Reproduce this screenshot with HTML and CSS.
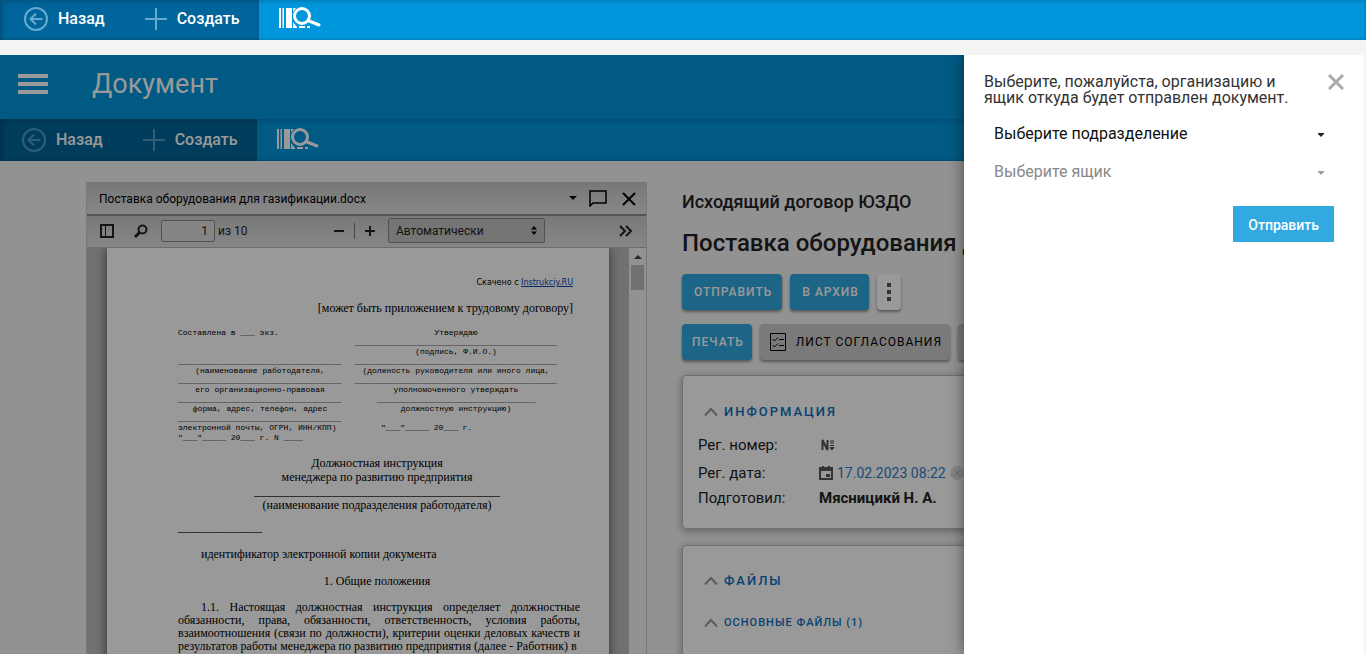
FILE: index.html
```html
<!DOCTYPE html>
<html lang="ru">
<head>
<meta charset="utf-8">
<title>Документ</title>
<link rel="stylesheet" href="styles.css">
</head>
<body>
<svg class="sprite" aria-hidden="true">
  <symbol id="back" viewBox="0 0 24 24"><g fill="none" stroke="currentColor" stroke-width="2"><circle cx="12" cy="12" r="11"/><path d="M18.500 12H7M12 6.500 6.500 12l5.500 5.500"/></g></symbol>
  <symbol id="plus" viewBox="0 0 22 22"><path d="M11 0v22M0 11h22" stroke="currentColor" stroke-width="2"/></symbol>
  <symbol id="scan" viewBox="0 0 42 22">
    <path fill="currentColor" d="M0 1h2v20H0zM3.500 1h1.500v20H3.500zM7 1h6v20H7zM14 1h3l-3 4zM14 15l4 5v1h-4zM20 19h6v2h-6zM28 19h3v2h-3z"/>
    <circle cx="23" cy="9" r="7.500" fill="none" stroke="currentColor" stroke-width="3"/>
    <path d="M29 13.500l11 4.500" stroke="currentColor" stroke-width="3" stroke-linecap="round"/>
  </symbol>
  <symbol id="up" viewBox="0 0 14 10"><path d="M1 8.500 7 2l6 6.500" fill="none" stroke="currentColor" stroke-width="2"/></symbol>
</svg>

<nav class="toolbar" aria-label="Панель">
  <div class="toolbar-group">
    <button class="tool" type="button"><svg class="i24"><use href="#back"/></svg>Назад</button>
    <button class="tool" type="button"><svg class="i22"><use href="#plus"/></svg>Создать</button>
  </div>
  <button class="scan" type="button" aria-label="Сканировать"><svg><use href="#scan"/></svg></button>
</nav>

<div class="frame">
  <header class="app-header">
    <button class="menu" type="button" aria-label="Меню"><span></span><span></span><span></span></button>
    <h1>Документ</h1>
  </header>
  <nav class="toolbar toolbar-inner" aria-label="Действия">
    <div class="toolbar-group">
      <button class="tool" type="button"><svg class="i24"><use href="#back"/></svg>Назад</button>
      <button class="tool" type="button"><svg class="i22"><use href="#plus"/></svg>Создать</button>
    </div>
    <button class="scan" type="button" aria-label="Сканировать"><svg><use href="#scan"/></svg></button>
  </nav>

  <main class="content">
    <section class="viewer">
      <div class="viewer-title">
        <span class="file-name">Поставка оборудования для газификации.docx</span>
        <button type="button" aria-label="Список файлов"><svg width="8" height="5"><path d="M0 0h8L4 4z"/></svg></button>
        <button type="button" aria-label="Комментарий"><svg width="18" height="17" viewBox="0 0 18 17"><path d="M1 1h16v12H4l-3 3z" fill="none" stroke="#000" stroke-width="1.500"/></svg></button>
        <button class="close" type="button" aria-label="Закрыть"><svg width="14" height="14"><path d="M1 1l12 12M13 1 1 13" stroke="#000" stroke-width="2"/></svg></button>
      </div>
      <div class="viewer-tools">
        <button type="button" aria-label="Боковая панель"><svg width="14" height="14"><path d="M1 1h12v12H1z" fill="none" stroke="#222" stroke-width="2"/><path d="M5.500 1v12" stroke="#222"/></svg></button>
        <button class="find" type="button" aria-label="Найти"><svg width="14" height="14"><circle cx="8.500" cy="5.500" r="4" fill="none" stroke="#222" stroke-width="2"/><path d="M5.500 8.500 1 13" stroke="#222" stroke-width="3"/></svg></button>
        <input class="page-no" type="text" value="1" aria-label="Страница">
        <span class="page-count">из 10</span>
        <button class="minus" type="button" aria-label="Уменьшить"><svg width="10" height="10"><path d="M0 5h10" stroke="#222" stroke-width="2"/></svg></button>
        <i class="sep"></i>
        <button type="button" aria-label="Увеличить"><svg width="10" height="10"><path d="M0 5h10M5 0v10" stroke="#222" stroke-width="2"/></svg></button>
        <span class="scale"><select aria-label="Масштаб"><option>Автоматически</option></select><svg width="6" height="9"><path d="M0 3.500h6L3 0zM0 5.500h6L3 9z"/></svg></span>
        <button class="more" type="button" aria-label="Ещё"><svg width="14" height="12"><path d="M1 1l5 5-5 5M7 1l5 5-5 5" fill="none" stroke="#222" stroke-width="2"/></svg></button>
      </div>
      <div class="viewer-body">
        <article class="sheet">
          <p class="source">Скачено с <a href="#">Instrukciy.RU</a></p>
          <p class="note">[может быть приложением к трудовому договору]</p>
          <div class="form">
            <div class="form-left">
              <span>Составлена в ___ экз.</span>
              <span></span>
              <span></span>
              <span>__________________________________</span>
              <span class="mid">(наименование работодателя,</span>
              <span>__________________________________</span>
              <span class="mid">его организационно-правовая</span>
              <span>__________________________________</span>
              <span class="mid">форма, адрес, телефон, адрес</span>
              <span>__________________________________</span>
              <span>электронной почты, ОГРН, ИНН/КПП)</span>
              <span>"___"_____ 20___ г. N ____</span>
            </div>
            <div class="form-right">
              <span class="mid">Утверждаю</span>
              <span>__________________________________________</span>
              <span class="mid">(подпись, Ф.И.О.)</span>
              <span>__________________________________________</span>
              <span class="mid">(должность руководителя или иного лица,</span>
              <span>__________________________________________</span>
              <span class="mid">уполномоченного утверждать</span>
              <span class="mid">_________________________________</span>
              <span class="mid">должностную инструкцию)</span>
              <span></span>
              <span class="date">"___"_____ 20___ г.</span>
            </div>
          </div>
          <p class="center head">Должностная инструкция<br>менеджера по развитию предприятия<br>_________________________________________<br>(наименование подразделения работодателя)</p>
          <p>______________</p>
          <p class="ident">идентификатор электронной копии документа</p>
          <p class="center">1. Общие положения</p>
          <p class="clause">1.1. Настоящая должностная инструкция определяет должностные обязанности, права, обязанности, ответственность, условия работы, взаимоотношения (связи по должности), критерии оценки деловых качеств и результатов работы менеджера по развитию предприятия (далее - Работник) в</p>
        </article>
        <div class="scrollbar"><svg width="8" height="4"><path d="M0 4h8L4 0z"/></svg><span></span></div>
      </div>
    </section>

    <section class="details">
      <h3>Исходящий договор ЮЗДО</h3>
      <h2>Поставка оборудования для газификации</h2>
      <div class="actions">
        <button class="btn" type="button">ОТПРАВИТЬ</button>
        <button class="btn" type="button">В АРХИВ</button>
        <button class="btn dots" type="button" aria-label="Ещё действия"><svg width="4" height="18"><path d="M0 0h4v4H0zM0 7h4v4H0zM0 14h4v4H0z"/></svg></button>
      </div>
      <div class="actions tight">
        <button class="btn" type="button">ПЕЧАТЬ</button>
        <button class="btn gray" type="button"><svg width="16" height="18" viewBox="0 0 16 18"><path d="M.5.5h15v17H.5zM9 6.500h5M9 12.500h5M2.500 6l2 2L8 4.500M2.500 12l2 2L8 10.500" fill="none" stroke="#000"/></svg>ЛИСТ СОГЛАСОВАНИЯ</button>
        <button class="btn gray" type="button" aria-label="Другие действия"></button>
      </div>
      <div class="card">
        <h4><svg><use href="#up"/></svg>ИНФОРМАЦИЯ</h4>
        <dl>
          <dt>Рег. номер:</dt>
          <dd><svg class="num" width="14" height="12" viewBox="0 0 14 12"><path d="M1.500 11V1l5 10V1" fill="none" stroke="#555" stroke-width="2"/><circle cx="11" cy="3" r="1.500" fill="none" stroke="#555"/><path d="M9 6.500h4M9 8.500h4l-2 2.500z" stroke="#555" fill="#555" stroke-width="1"/></svg></dd>
          <dt>Рег. дата:</dt>
          <dd><svg width="14" height="14"><path d="M1 2h12v11H1z" fill="none" stroke="#555" stroke-width="2"/><path d="M0 1h14v4H0zM3 0h2v2H3zM9 0h2v2H9zM7 8h4v3H7z" fill="#555"/></svg><a href="#">17.02.2023 08:22</a><svg width="14" height="14"><circle cx="7" cy="7" r="7" fill="#e0e0e0"/><path d="M4 4l6 6M10 4l-6 6" stroke="#bbb"/></svg></dd>
          <dt>Подготовил:</dt>
          <dd><strong>Мясницикй Н. А.</strong></dd>
        </dl>
      </div>
      <div class="card">
        <h4><svg><use href="#up"/></svg>ФАЙЛЫ</h4>
        <h5><svg><use href="#up"/></svg>ОСНОВНЫЕ ФАЙЛЫ (1)</h5>
      </div>
    </section>
  </main>
  <div class="scrim"></div>

  <aside class="drawer">
    <form>
      <div class="drawer-head">
        <p>Выберите, пожалуйста, организацию и ящик откуда будет отправлен документ.</p>
        <button type="button" aria-label="Закрыть"><svg width="16" height="16"><path d="M1 1l14 14M15 1 1 15" stroke="#aaa" stroke-width="3"/></svg></button>
      </div>
      <div class="pick"><select aria-label="Подразделение"><option>Выберите подразделение</option></select><svg width="6" height="4"><path d="M0 0h6v1L3 4 0 1z"/></svg></div>
      <div class="pick off"><select aria-label="Ящик" disabled><option>Выберите ящик</option></select><svg width="6" height="4"><path d="M0 0h6v1L3 4 0 1z"/></svg></div>
      <button class="send" type="button">Отправить</button>
    </form>
  </aside>
</div>
</body>
</html>
```
FILE: styles.css
```css
* { box-sizing: border-box; }
html, body { height: 100%; }
body {
  margin: 0;
  display: flex;
  flex-direction: column;
  gap: 15px;
  overflow: hidden;
  background: #f4f4f4;
  font-family: Roboto, "Noto Sans", sans-serif;
  color: #222;
}
h1, h2, h3, h4, h5, p, dl, dd { margin: 0; }
button, select, input { font: inherit; color: inherit; }
button { padding: 0; border: 0; background: none; }
svg { flex: none; display: block; }
.sprite { position: absolute; width: 0; height: 0; }

.toolbar {
  flex: none;
  display: flex;
  height: 40px;
  background: #0096dc;
  box-shadow: inset 0 2px 4px rgba(0, 0, 0, .15), inset 0 -1px 3px rgba(0, 0, 0, .15);
}
.toolbar-group {
  display: flex;
  gap: 40px;
  padding: 0 19px 3px 24px;
  background: #00659a;
  box-shadow: inset 3px 2px 5px rgba(0, 0, 0, .15), inset 0 -1px 3px rgba(0, 0, 0, .15);
}
.tool {
  display: flex;
  align-items: center;
  gap: 10px;
  font-size: 16px;
  font-weight: 500;
  color: #fff;
}
.tool svg { color: #66abd0; }
.i24 { width: 24px; height: 24px; }
.i22 { width: 22px; height: 22px; }
.scan { padding: 0 20px 4px; color: #fff; }
.scan svg { width: 42px; height: 22px; }
.toolbar-inner { height: 42px; }
.toolbar-inner .toolbar-group { padding-left: 22px; padding-bottom: 1px; }
.toolbar-inner .tool svg { opacity: .8; }
.toolbar-inner .scan { padding-bottom: 2px; }

.frame {
  position: relative;
  flex: 1;
  min-height: 0;
  margin-right: 2px;
  display: flex;
  flex-direction: column;
  overflow: hidden;
}
.app-header {
  flex: none;
  display: flex;
  align-items: center;
  gap: 44px;
  height: 64px;
  padding: 0 18px 7px;
  background: #0096dc;
}
.menu { display: grid; gap: 4px; width: 30px; }
.menu span { height: 4px; background: #fff; }
.app-header h1 { font-size: 27px; font-weight: 400; line-height: 32px; color: #fff; }

.content {
  flex: 1;
  min-height: 0;
  display: grid;
  grid-template-columns: 561px 1fr;
  gap: 35px;
  padding: 21px 0 0 86px;
}
.scrim { position: absolute; inset: 0; background: rgba(0, 0, 0, .4); }

.viewer {
  display: flex;
  flex-direction: column;
  min-height: 0;
  border: 1px solid #c8c8c8;
  border-bottom: 0;
  font-size: 12px;
}
.viewer-title {
  flex: none;
  display: flex;
  align-items: center;
  gap: 12px;
  height: 33px;
  padding: 0 10px 0 12px;
  border-bottom: 2px solid #8c8c8c;
  background: linear-gradient(#c8c8c8, #e2e2e2);
  color: #000;
}
.file-name { flex: 1; }
.close { margin-left: 3px; }
.viewer-tools {
  flex: none;
  display: flex;
  align-items: center;
  height: 32px;
  padding: 0 13px 2px;
  border-bottom: 1px solid #b4b4b4;
  background: linear-gradient(#cacaca, #e0e0e0);
}
.find { margin: 0 13px 0 20px; }
.page-no {
  width: 54px;
  height: 22px;
  padding: 0 6px;
  border: 1px solid #888;
  border-radius: 2px;
  background: #dedede;
  text-align: right;
}
.page-count { flex: 1; padding-left: 3px; }
.sep { width: 1px; height: 16px; margin: 0 10px; background: #777; }
.scale { display: flex; align-items: center; margin: 0 74px 0 13px; }
.scale select {
  appearance: none;
  width: 157px;
  height: 25px;
  padding: 0 7px;
  border: 1px solid #888;
  border-radius: 2px;
  background: #c3c3c3;
}
.scale svg { margin: 0 8px 0 -14px; }
.viewer-body {
  flex: 1;
  min-height: 0;
  display: flex;
  justify-content: space-between;
  padding-left: 20px;
  overflow: hidden;
  background: #bdbdbd;
}
.sheet {
  width: 502px;
  height: 700px;
  padding: 28px 33px 0 71px;
  background: #fff;
  box-shadow: 0 0 10px rgba(0, 0, 0, .6);
  font-family: "Liberation Serif", "Times New Roman", serif;
  font-size: 12px;
  line-height: 14px;
  color: #000;
}
.sheet p { margin-bottom: 13px; }
.sheet .source, .sheet .note { padding-right: 3px; text-align: right; }
.sheet .source { margin-bottom: 11px; font-family: "DejaVu Sans", sans-serif; font-size: 8px; }
.source a { color: #0645ad; }
.form {
  display: grid;
  grid-template-columns: 164px 202px;
  gap: 13px;
  margin-bottom: 14px;
  font-family: "Liberation Mono", monospace;
  font-size: 8px;
}
.form span { display: block; height: 10px; line-height: 10px; white-space: nowrap; }
.form span:nth-child(even) { height: 9px; line-height: 9px; }
.form .mid { text-align: center; }
.form .date { padding-left: 26px; }
.center { text-align: center; }
.sheet .head { margin-bottom: 8px; }
.ident { padding-left: 23px; }
.sheet .clause { margin-right: -4px; line-height: 13px; text-indent: 23px; text-align: justify; }
.scrollbar {
  width: 17px;
  padding: 7px 2px 0;
  background: #f4f4f4;
  display: flex;
  flex-direction: column;
  align-items: center;
  gap: 6px;
}
.scrollbar svg { fill: #444; }
.scrollbar span { width: 13px; height: 25px; background: #bdbdbd; }

.details { min-width: 0; padding-top: 9px; }
.details h3 { font-size: 18px; font-weight: 500; line-height: 22px; }
.details h2 { margin: 15px 0 16px; font-size: 24px; font-weight: 500; line-height: 30px; white-space: nowrap; }
.actions { display: flex; gap: 8px; margin-bottom: 14px; }
.btn {
  flex: none;
  display: flex;
  align-items: center;
  gap: 10px;
  height: 36px;
  padding: 0 10px 1px 12px;
  border-radius: 4px;
  background: #31a8e0;
  box-shadow: 0 2px 3px rgba(0, 0, 0, .4);
  font-size: 12px;
  font-weight: 500;
  letter-spacing: 1px;
  color: #fff;
}
.tight .btn { padding: 0 8px 1px 10px; }
.dots { padding: 0 10px; background: #fff; }
.dots svg { fill: #555; }
.gray { background: #cbcbcb; color: #000; font-weight: 400; }
.card {
  width: 700px;
  margin: 15px 0 16px;
  padding: 27px 15px 19px;
  border: 1px solid #bbb;
  border-radius: 4px;
  background: #fff;
  box-shadow: 0 2px 8px rgba(0, 0, 0, .35);
}
.card + .card { padding-top: 26px; }
h4, h5 {
  display: flex;
  align-items: center;
  gap: 6px;
  padding-left: 6px;
  font-size: 13px;
  font-weight: 500;
  line-height: 18px;
  letter-spacing: 2px;
  color: #0d6ebd;
}
h4 svg, h5 svg { width: 14px; height: 10px; color: #999; }
h5 { margin: 24px 0 40px; font-size: 11px; letter-spacing: 1px; }
dl {
  display: grid;
  grid-template-columns: 121px 1fr;
  grid-template-rows: 28px 28px 22px;
  margin-top: 10px;
  font-size: 15px;
  line-height: 28px;
}
dt:last-of-type, dd:last-of-type { line-height: 22px; }
dd { display: flex; align-items: center; gap: 4px; }
dd a { font-size: 14px; color: #2f7dc4; text-decoration: none; }
dd strong { font-weight: 700; }
.num { margin-left: 2px; }

.drawer {
  position: absolute;
  inset: 0 0 0 auto;
  width: 400px;
  padding: 19px 20px;
  background: #fff;
  box-shadow: 0 0 14px rgba(0, 0, 0, .5);
  font-size: 16px;
  color: #333;
}
.drawer form { display: flex; flex-direction: column; }
.drawer-head { display: flex; justify-content: space-between; align-items: flex-start; line-height: 16px; margin-bottom: 8px; }
.drawer-head p { width: 320px; }
.pick { display: flex; align-items: center; height: 38px; color: #111; }
.pick select {
  appearance: none;
  flex: 1;
  height: 38px;
  padding: 0 30px 0 10px;
  border: 0;
  background: transparent;
}
.pick svg { margin: 4px 20px 0 -26px; fill: #223; }
.off select { color: #888; opacity: 1; }
.off svg { fill: #999fa8; }
.send {
  align-self: flex-end;
  height: 36px;
  margin: 16px 10px 0;
  padding: 1px 15px 0;
  background: #33a9e2;
  color: #fff;
  font-size: 14px;
  font-weight: 500;
}
```
